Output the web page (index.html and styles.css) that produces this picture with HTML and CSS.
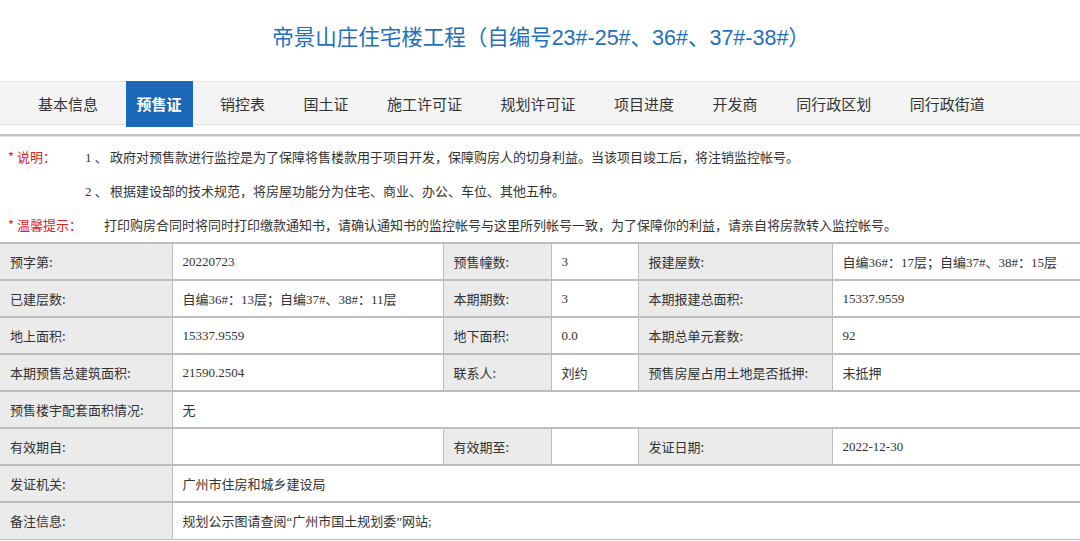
FILE: index.html
```html
<!DOCTYPE html>
<html lang="zh-CN">
<head>
<meta charset="utf-8">
<title>帝景山庄住宅楼工程</title>
<link rel="stylesheet" href="styles.css">
</head>
<body>
<header class="title-bar">
  <h1 class="title">帝景山庄住宅楼工程（自编号23#-25#、36#、37#-38#）</h1>
</header>
<nav class="tabs">
  <a class="tab">基本信息</a>
  <a class="tab active">预售证</a>
  <a class="tab">销控表</a>
  <a class="tab">国土证</a>
  <a class="tab">施工许可证</a>
  <a class="tab">规划许可证</a>
  <a class="tab">项目进度</a>
  <a class="tab">开发商</a>
  <a class="tab">同行政区划</a>
  <a class="tab">同行政街道</a>
</nav>
<section class="notes">
  <div class="note">
    <span class="note-label">* 说明：</span>
    <span class="note-num">1 、</span>
    <span class="note-text">政府对预售款进行监控是为了保障将售楼款用于项目开发，保障购房人的切身利益。当该项目竣工后，将注销监控帐号。</span>
  </div>
  <div class="note">
    <span class="note-label"></span>
    <span class="note-num">2 、</span>
    <span class="note-text">根据建设部的技术规范，将房屋功能分为住宅、商业、办公、车位、其他五种。</span>
  </div>
  <div class="note note-last">
    <span class="note-label">* 温馨提示：</span>
    <span class="note-text note-tip">打印购房合同时将同时打印缴款通知书，请确认通知书的监控帐号与这里所列帐号一致，为了保障你的利益，请亲自将房款转入监控帐号。</span>
  </div>
</section>
<table class="info">
  <colgroup>
    <col class="c1"><col class="c2"><col class="c3"><col class="c4"><col class="c5"><col class="c6">
  </colgroup>
  <tr>
    <th>预字第:</th><td>20220723</td>
    <th>预售幢数:</th><td>3</td>
    <th>报建屋数:</th><td>自编36#：17层；自编37#、38#：15层</td>
  </tr>
  <tr>
    <th>已建层数:</th><td>自编36#：13层；自编37#、38#：11层</td>
    <th>本期期数:</th><td>3</td>
    <th>本期报建总面积:</th><td>15337.9559</td>
  </tr>
  <tr>
    <th>地上面积:</th><td>15337.9559</td>
    <th>地下面积:</th><td>0.0</td>
    <th>本期总单元套数:</th><td>92</td>
  </tr>
  <tr>
    <th>本期预售总建筑面积:</th><td>21590.2504</td>
    <th>联系人:</th><td>刘约</td>
    <th>预售房屋占用土地是否抵押:</th><td>未抵押</td>
  </tr>
  <tr>
    <th>预售楼宇配套面积情况:</th><td colspan="5">无</td>
  </tr>
  <tr>
    <th>有效期自:</th><td></td>
    <th>有效期至:</th><td></td>
    <th>发证日期:</th><td>2022-12-30</td>
  </tr>
  <tr>
    <th>发证机关:</th><td colspan="5">广州市住房和城乡建设局</td>
  </tr>
  <tr>
    <th>备注信息:</th><td colspan="5">规划公示图请查阅“广州市国土规划委”网站;</td>
  </tr>
</table>
</body>
</html>
```

FILE: styles.css
```css
* { box-sizing: border-box; }

body {
  margin: 0;
  background: #ffffff;
  color: #333333;
  font-family: "Liberation Serif", "Noto Sans CJK SC", serif;
  font-size: 13px;
}

.title-bar {
  height: 81px;
  display: flex;
  align-items: center;
  justify-content: center;
  padding-bottom: 5px;
  padding-left: 2px;
}

.title {
  margin: 0;
  font-family: "Liberation Sans", "Noto Sans CJK SC", sans-serif;
  font-weight: normal;
  font-size: 21.5px;
  line-height: 26px;
  color: #1f6fbd;
}

.tabs {
  display: flex;
  align-items: flex-start;
  gap: 16.5px;
  height: 44px;
  padding-left: 27px;
  background: #f4f4f4;
  border-top: 1px solid #e6e6e6;
  border-bottom: 1px solid #dedede;
}

.tab {
  display: block;
  height: 43px;
  line-height: 43px;
  padding: 0 11px;
  font-family: "Noto Sans CJK SC", sans-serif;
  font-size: 15px;
  color: #333333;
}

.tab.active {
  margin-top: -1px;
  height: 46px;
  line-height: 45px;
  background: #1c68b8;
  color: #ffffff;
  font-weight: bold;
}

.notes {
  margin-top: 9px;
  border-top: 2px solid #c2c2c2;
  box-shadow: inset 0 1px 0 #e2e2e2;
  padding-top: 3px;
}

.note {
  display: flex;
  align-items: center;
  height: 34px;
  padding-left: 8px;
}

.note-last { height: 35px; }

.note-label {
  width: 77px;
  flex: none;
  color: #e0201c;
  font-family: "Noto Sans CJK SC", sans-serif;
}

.note-num {
  width: 25px;
  flex: none;
}

.note-text {
  font-family: "Noto Sans CJK SC", sans-serif;
}

.note-tip { margin-left: 19px; }

.info {
  width: 100%;
  border-collapse: collapse;
  table-layout: fixed;
  border-top: 2px solid #bdbdbd;
}

.c1 { width: 172px; }
.c2 { width: 271px; }
.c3 { width: 108px; }
.c4 { width: 87px; }
.c5 { width: 194px; }
.c6 { width: 248px; }

.info th,
.info td {
  height: 37px;
  padding: 0 10px;
  border: 1px solid #bdbdbd;
  border-top-width: 2px;
  text-align: left;
  font-weight: normal;
  font-size: 13px;
  color: #333333;
  white-space: nowrap;
}

.info th {
  background: #ebebeb;
  font-family: "Noto Sans CJK SC", sans-serif;
}

.info tr > :first-child { border-left: none; }
.info tr > :last-child { border-right: none; }
```
